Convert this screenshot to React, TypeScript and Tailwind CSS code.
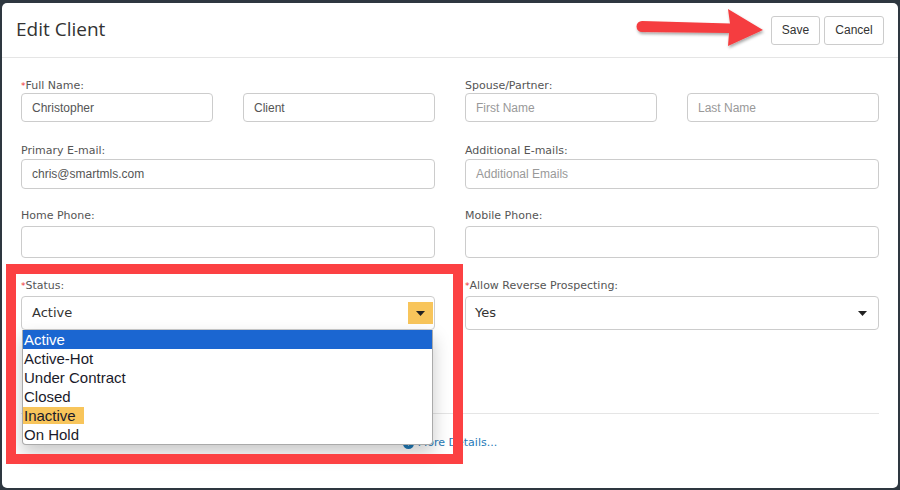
const labelCls = "h-[14px] leading-[14px] text-[11px] text-[#555] font-['DejaVu_Sans',sans-serif] whitespace-nowrap";
const inputCls =
  "w-full rounded-[4px] border border-[#ccc] bg-white px-[10px] flex items-center text-[12px] font-['Liberation_Sans',Arial,sans-serif]";

function Label({ text, required }: { text: string; required?: boolean }) {
  return (
    <div className={labelCls}>
      {required && <span className="text-[#e33] text-[9px] align-top">*</span>}
      {text}
    </div>
  );
}

function Input({ value, placeholder, h }: { value?: string; placeholder?: string; h: string }) {
  return (
    <div className={`${inputCls} ${h}`}>
      {value ? <span className="text-[#555]">{value}</span> : <span className="text-[#999]">{placeholder}</span>}
    </div>
  );
}

function Caret() {
  return (
    <svg width="9" height="5" viewBox="0 0 9 5">
      <path d="M0 0h9L4.5 5z" fill="#222" />
    </svg>
  );
}

const options = ["Active", "Active-Hot", "Under Contract", "Closed", "Inactive", "On Hold"];

export default function App() {
  return (
    <div className="relative w-[900px] h-[490px] overflow-hidden bg-[#2e3740] pt-[3px] px-[2px] pb-[2px]">
      <div className="h-full w-full rounded-[5px] bg-white">
        {/* header */}
        <div className="h-[55px] border-b border-[#e5e5e5] flex items-center justify-between pl-[14px] pr-[14px]">
          <h1 className="text-[19px] text-[#333] font-['Open_Sans',sans-serif] -mt-[2px]">Edit Client</h1>
          <div className="flex gap-[4px] font-['Liberation_Sans',Arial,sans-serif] text-[12px] text-[#333]">
            <button className="h-[29px] w-[49px] rounded-[3px] border border-[#ccc] bg-white">Save</button>
            <button className="h-[29px] w-[60px] rounded-[3px] border border-[#ccc] bg-white">Cancel</button>
          </div>
        </div>

        {/* body */}
        <div className="px-[19px] pt-[21px]">
          <div className="grid grid-cols-2 gap-x-[30px]">
            <div>
              <Label text="Full Name:" required />
              <div className="grid grid-cols-2 gap-x-[30px]">
                <Input value="Christopher" h="h-[29px]" />
                <Input value="Client" h="h-[29px]" />
              </div>
            </div>
            <div>
              <Label text="Spouse/Partner:" />
              <div className="grid grid-cols-2 gap-x-[30px]">
                <Input placeholder="First Name" h="h-[29px]" />
                <Input placeholder="Last Name" h="h-[29px]" />
              </div>
            </div>

            <div className="mt-[22px]">
              <Label text="Primary E-mail:" />
              <div className="mt-[1px]">
                <Input value="chris@smartmls.com" h="h-[30px]" />
              </div>
            </div>
            <div className="mt-[22px]">
              <Label text="Additional E-mails:" />
              <div className="mt-[1px]">
                <Input placeholder="Additional Emails" h="h-[30px]" />
              </div>
            </div>

            <div className="mt-[20px]">
              <Label text="Home Phone:" />
              <div className="mt-[3px]">
                <Input h="h-[32px]" />
              </div>
            </div>
            <div className="mt-[20px]">
              <Label text="Mobile Phone:" />
              <div className="mt-[3px]">
                <Input h="h-[32px]" />
              </div>
            </div>

            <div className="mt-[21px] relative">
              <Label text="Status:" required />
              <div className="mt-[3px] h-[34px] rounded-[4px] border border-[#ccc] bg-white flex items-center justify-between pl-[10px] pr-[1px]">
                <span className="text-[13px] text-[#333] font-['DejaVu_Sans',sans-serif]">Active</span>
                <span className="w-[25px] h-[22px] bg-[#f8c55b] flex items-center justify-center">
                  <Caret />
                </span>
              </div>
              {/* open list */}
              <div className="absolute left-[1px] top-[51px] w-[411px] z-10 rounded-b-[4px] border border-[#aaa] border-t-0 bg-white shadow-[0_8px_18px_rgba(0,0,0,0.22)] font-['Liberation_Sans',Arial,sans-serif] text-[15px] text-[#1a1a2a]">
                {options.map((o) => (
                  <div
                    key={o}
                    className={`h-[19px] leading-[19px] ${o === "Active" ? "bg-[#1b66d1] text-white" : ""}`}
                  >
                    <span className={`pl-[1px] ${o === "Inactive" ? "bg-[#f8c55b] pr-[8px]" : ""}`}>{o}</span>
                  </div>
                ))}
              </div>
            </div>
            <div className="mt-[21px]">
              <Label text="Allow Reverse Prospecting:" required />
              <div className="mt-[3px] h-[34px] rounded-[4px] border border-[#ccc] bg-white flex items-center justify-between pl-[9px] pr-[11px]">
                <span className="text-[13px] text-[#333] font-['DejaVu_Sans',sans-serif]">Yes</span>
                <Caret />
              </div>
            </div>
          </div>

          <div className="mt-[83px] border-t border-[#e5e5e5]" />
          <div className="mt-[21px] flex items-center justify-center gap-[4px] text-[11px] text-[#1f7ab8] font-['DejaVu_Sans',sans-serif]">
            <svg width="11" height="11" viewBox="0 0 12 12">
              <circle cx="6" cy="6" r="6" fill="#1f7ab8" />
              <path d="M3.5 5l2.5 2.5L8.5 5" stroke="#fff" strokeWidth="1.5" fill="none" />
            </svg>
            <span>More Details...</span>
          </div>
        </div>
      </div>

      {/* red highlight box */}
      <div className="absolute left-[6px] top-[264px] w-[457px] h-[200px] border-[10px] border-[#fc4143] z-20" />

      {/* arrow */}
      <svg className="absolute left-[630px] top-[4px] z-20" width="145" height="50" viewBox="0 0 145 50">
        <defs>
          <filter id="sh" x="-10%" y="-20%" width="130%" height="160%">
            <feDropShadow dx="1" dy="2" stdDeviation="1.5" floodColor="#000" floodOpacity="0.35" />
          </filter>
        </defs>
        <g filter="url(#sh)">
          <path d="M12 17 L100 19.5 L98 5 L133 26 L98 42 L99 29 L12 28 A5.5 5.5 0 0 1 12 17z" fill="#f53d3f" />
        </g>
      </svg>
    </div>
  );
}
